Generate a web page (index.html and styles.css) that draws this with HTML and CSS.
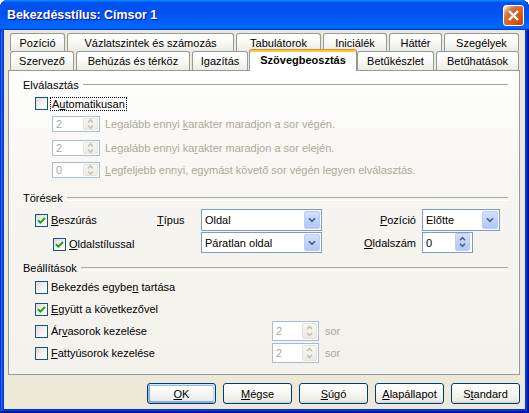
FILE: index.html
```html
<!DOCTYPE html>
<html lang="hu">
<head>
<meta charset="utf-8">
<title>Bekezdésstílus</title>
<link rel="stylesheet" href="styles.css">
</head>
<body>
<div class="window">
  <div class="titlebar">
    <span class="title">Bekezdésstílus: Címsor 1</span>
    <span class="close"><svg width="19" height="19" viewBox="0 0 19 19"><path d="M5 5L14 14M14 5L5 14" stroke="#fff" stroke-width="2.4"/></svg></span>
  </div>
  <div class="client">
    <div class="tabs">
      <div class="tabrow row1">
        <div class="tab w55">Pozíció</div>
        <div class="tab w167">Vázlatszintek és számozás</div>
        <div class="tab w85">Tabulátorok</div>
        <div class="tab w64">Iniciálék</div>
        <div class="tab w53">Háttér</div>
        <div class="tab w75">Szegélyek</div>
      </div>
      <div class="tabrow row2">
        <div class="tab w64">Szervező</div>
        <div class="tab w114">Behúzás és térköz</div>
        <div class="tab w56">Igazítás</div>
        <div class="tab active">Szövegbeosztás</div>
        <div class="tab w77">Betűkészlet</div>
        <div class="tab w83">Betűhatások</div>
      </div>
    </div>
    <div class="panel">
      <div class="ghead">Elválasztás</div>
      <div class="crow">
        <span class="cb"></span>
        <span class="clbl focus">A<u>u</u>tomatikusan</span>
      </div>
      <div class="srow sr1">
        <span class="spin sm dis"><span class="val">2</span><span class="sbtn"><svg width="13" height="12" viewBox="0 0 13 12"><path d="M4 4.5L6.5 2L9 4.5M4 7.5L6.5 10L9 7.5" fill="none" stroke="#c4c2b6" stroke-width="1.6"/></svg></span></span>
        <span class="stext">Legalább ennyi <u>k</u>arakter maradjon a sor végén.</span>
      </div>
      <div class="srow sr2">
        <span class="spin sm dis"><span class="val">2</span><span class="sbtn"><svg width="13" height="12" viewBox="0 0 13 12"><path d="M4 4.5L6.5 2L9 4.5M4 7.5L6.5 10L9 7.5" fill="none" stroke="#c4c2b6" stroke-width="1.6"/></svg></span></span>
        <span class="stext">Legalább ennyi ka<u>r</u>akter maradjon a sor elején.</span>
      </div>
      <div class="srow sr3">
        <span class="spin sm dis"><span class="val">0</span><span class="sbtn"><svg width="13" height="12" viewBox="0 0 13 12"><path d="M4 4.5L6.5 2L9 4.5M4 7.5L6.5 10L9 7.5" fill="none" stroke="#c4c2b6" stroke-width="1.6"/></svg></span></span>
        <span class="stext"><u>L</u>egfeljebb ennyi, egymást követő sor végén legyen elválasztás.</span>
      </div>

      <div class="ghead gh2">Törések</div>
      <div class="brow ba">
        <div class="bcell1"><span class="cb"><svg width="9" height="9" viewBox="0 0 9 9"><path d="M1 4.2L3.4 6.6L8 2" fill="none" stroke="#21a121" stroke-width="2"/></svg></span><span class="clbl"><u>B</u>eszúrás</span></div>
        <div class="bcell2"><u>T</u>ípus</div>
        <div class="select wide"><span class="stxt">Oldal</span><span class="dbtn"><svg width="16" height="18" viewBox="0 0 16 18"><path d="M4.5 7L8 10.5L11.5 7" fill="none" stroke="#4d6185" stroke-width="2"/></svg></span></div>
        <div class="bcell3"><u>P</u>ozíció</div>
        <div class="select narrow"><span class="stxt">Előtte</span><span class="dbtn"><svg width="16" height="18" viewBox="0 0 16 18"><path d="M4.5 7L8 10.5L11.5 7" fill="none" stroke="#4d6185" stroke-width="2"/></svg></span></div>
      </div>
      <div class="brow bb">
        <div class="bcell1 ind"><span class="cb"><svg width="9" height="9" viewBox="0 0 9 9"><path d="M1 4.2L3.4 6.6L8 2" fill="none" stroke="#21a121" stroke-width="2"/></svg></span><span class="clbl"><u>O</u>ldalstílussal</span></div>
        <div class="bcell2"></div>
        <div class="select wide short"><span class="stxt">Páratlan oldal</span><span class="dbtn"><svg width="16" height="18" viewBox="0 0 16 18"><path d="M4.5 7L8 10.5L11.5 7" fill="none" stroke="#4d6185" stroke-width="2"/></svg></span></div>
        <div class="bcell3"><u>O</u>ldalszám</div>
        <span class="spin big"><span class="val">0</span><span class="sbtn blue"><svg width="15" height="18" viewBox="0 0 15 18"><path d="M4.5 7L7.5 4L10.5 7M4.5 11L7.5 14L10.5 11" fill="none" stroke="#4d6185" stroke-width="1.8"/></svg></span></span>
      </div>

      <div class="ghead gh3">Beállítások</div>
      <div class="orow o1">
        <div class="ocell"><span class="cb"></span><span class="clbl">Bekezdés egybe<u>n</u> tartása</span></div>
      </div>
      <div class="orow">
        <div class="ocell"><span class="cb"><svg width="9" height="9" viewBox="0 0 9 9"><path d="M1 4.2L3.4 6.6L8 2" fill="none" stroke="#21a121" stroke-width="2"/></svg></span><span class="clbl"><u>E</u>gyütt a következővel</span></div>
      </div>
      <div class="orow">
        <div class="ocell"><span class="cb"></span><span class="clbl">Ár<u>v</u>asorok kezelése</span></div>
        <span class="spin md dis"><span class="val">2</span><span class="sbtn"><svg width="13" height="16" viewBox="0 0 13 16"><path d="M4 6L6.5 3.5L9 6M4 10L6.5 12.5L9 10" fill="none" stroke="#c4c2b6" stroke-width="1.6"/></svg></span></span>
        <span class="sor">sor</span>
      </div>
      <div class="orow">
        <div class="ocell"><span class="cb"></span><span class="clbl"><u>F</u>attyúsorok kezelése</span></div>
        <span class="spin md dis"><span class="val">2</span><span class="sbtn"><svg width="13" height="16" viewBox="0 0 13 16"><path d="M4 6L6.5 3.5L9 6M4 10L6.5 12.5L9 10" fill="none" stroke="#c4c2b6" stroke-width="1.6"/></svg></span></span>
        <span class="sor">sor</span>
      </div>
    </div>
    <div class="buttons">
      <div class="btn default"><u>O</u>K</div>
      <div class="btn"><u>M</u>égse</div>
      <div class="btn"><u>S</u>úgó</div>
      <div class="btn"><u>A</u>lapállapot</div>
      <div class="btn">S<u>t</u>andard</div>
    </div>
  </div>
</div>
</body>
</html>
```
FILE: styles.css
```css
* { box-sizing: border-box; }
html, body { margin: 0; padding: 0; }
body {
  background: #fff;
  font-family: "Liberation Sans", Arial, sans-serif;
  font-size: 11px;
  color: #000;
}
u { text-decoration: underline; text-underline-offset: 1px; }

.window {
  width: 529px;
  height: 413px;
  display: flex;
  flex-direction: column;
  background: #0831d9;
  border-radius: 8px 8px 0 0;
  box-shadow: inset -1px -1px #00138c, inset 1px 1px #0831d9,
              inset -2px -2px #001ea0, inset 2px 2px #166aee,
              inset -3px -3px #003bda, inset 3px 3px #0855dd;
}
.titlebar {
  height: 30px;
  flex: none;
  display: flex;
  align-items: center;
  justify-content: space-between;
  padding: 0 5px 0 7px;
  border-radius: 8px 8px 0 0;
  background: linear-gradient(180deg, #0997ff, #0053ee 8%, #0050ee 40%, #0066ff 88%, #0066ff 93%, #005bff 95%, #003dd7 96%, #003dd7);
}
.title {
  color: #fff;
  font-weight: bold;
  font-size: 12.4px;
  text-shadow: 1px 1px #0f1089;
}
.close {
  width: 21px;
  height: 21px;
  border: 1px solid #fff;
  border-radius: 3px;
  display: flex;
  align-items: center;
  justify-content: center;
  background: radial-gradient(circle at 90% 90%, #cc4600 0%, #dc6527 55%, #cd7546 70%, #ffccb2 90%, #fff 100%);
}

.client {
  flex: 1;
  margin: 0 4px 4px;
  background: #ece9d8;
  padding: 3px 5px 5px 4px;
  display: flex;
  flex-direction: column;
}

.tabs { padding-left: 2px; }
.tabrow { display: flex; gap: 2px; }
.row1 { height: 18px; align-items: flex-start; }
.row2 { height: 19px; align-items: flex-end; }
.tab {
  height: 18px;
  padding-top: 3px;
  border: 1px solid #919b9c;
  border-bottom: none;
  border-radius: 3px 3px 0 0;
  background: linear-gradient(180deg, #fff 0%, #fbfbf9 40%, #f1f0ea 80%, #ecebe6 100%);
  text-align: center;
  white-space: nowrap;
  line-height: 13px;
}
.row2 .tab { height: 19px; }
.row2 .tab.active {
  position: relative;
  z-index: 2;
  width: 108px;
  height: 22px;
  margin: 0 -2px -1px -1px;
  padding-top: 4px;
  background: #fff;
  border-top: 1px solid #e68b2c;
  box-shadow: inset 0 2px 0 #ffc73c;
  font-weight: bold;
}
.w53 { width: 53px; }
.w55 { width: 55px; }
.w56 { width: 56px; }
.w64 { width: 64px; }
.w75 { width: 75px; }
.w77 { width: 77px; }
.w83 { width: 83px; }
.w85 { width: 85px; }
.w114 { width: 114px; }
.w167 { width: 167px; }

.panel {
  position: relative;
  z-index: 1;
  height: 305px;
  flex: none;
  border: 1px solid #919b9c;
  background: linear-gradient(180deg, #fefefe 0%, #f7f6f3 35%, #f4f3ee 60%, #f3f2ed 100%);
  padding: 8px 11px 0 14px;
}

.ghead {
  display: flex;
  align-items: center;
  height: 13px;
  line-height: 13px;
}
.ghead::after {
  content: "";
  flex: 1;
  margin-left: 4px;
  height: 2px;
  border-top: 1px solid #aca899;
  border-bottom: 1px solid #fff;
}
.gh2 { margin-top: 14px; }
.gh3 { margin-top: 8px; }

.cb {
  flex: none;
  width: 13px;
  height: 13px;
  border: 1px solid #1c5180;
  background: linear-gradient(135deg, #dcdcd7 0%, #f4f4f1 60%, #fff 100%);
  display: inline-flex;
  align-items: center;
  justify-content: center;
}
.clbl { margin-left: 3px; white-space: nowrap; line-height: 13px; }
.clbl.focus {
  margin-left: 2px;
  padding: 0 1px;
  border: 1px dotted #000;
  line-height: 12px;
}

.crow {
  display: flex;
  align-items: center;
  height: 15px;
  margin-top: 4px;
  padding-left: 12px;
}
.srow {
  display: flex;
  align-items: center;
  height: 16px;
  padding-left: 29px;
}
.sr1 { margin-top: 5px; }
.sr2 { margin-top: 8px; }
.sr3 { margin-top: 6px; }
.stext { margin-left: 5px; color: #aca899; white-space: nowrap; }

.spin {
  display: flex;
  align-items: stretch;
  border: 1px solid #7f9db9;
  background: #fff;
  flex: none;
}
.spin.dis { border-color: #a9bbd1; color: #aca899; }
.spin.sm { width: 48px; height: 16px; }
.spin.md { width: 47px; height: 20px; }
.spin.big { width: 51px; height: 21px; }
.val { flex: 1; padding-left: 3px; display: flex; align-items: center; }
.sbtn {
  width: 15px;
  margin: 1px;
  border-radius: 2px;
  background: linear-gradient(180deg, #f7f7f4, #ecebe5);
  border: 1px solid #e4e2d8;
  display: flex;
  align-items: center;
  justify-content: center;
}
.sbtn.blue {
  margin: 0 2px 1px 1px;
  border: 1px solid #b9cdf6;
  background: linear-gradient(180deg, #d3e0fd 0%, #c1d3fb 50%, #b4c8f6 100%);
}

.brow { display: flex; align-items: center; height: 22px; }
.ba { margin-top: 4px; }
.bb { margin-top: 1px; align-items: flex-start; }
.bcell1 {
  width: 134px;
  padding-left: 12px;
  display: flex;
  align-items: center;
}
.bcell1.ind { padding-left: 30px; margin-top: 6px; }
.bcell2 { width: 44px; }
.bb .bcell2, .bb .bcell3 { align-self: center; }
.bcell3 { width: 100px; text-align: right; padding-right: 6px; }

.select {
  display: flex;
  align-items: stretch;
  height: 22px;
  border: 1px solid #7f9db9;
  background: #fff;
  flex: none;
}
.select.wide { width: 121px; }
.select.narrow { width: 78px; }
.select.short { height: 21px; }
.stxt { flex: 1; padding-left: 3px; display: flex; align-items: center; white-space: nowrap; overflow: hidden; }
.dbtn {
  width: 16px;
  margin: 1px;
  border-radius: 2px;
  border: 1px solid #b9cdf6;
  background: linear-gradient(180deg, #d3e0fd 0%, #c1d3fb 50%, #b1c6f6 100%);
  display: flex;
  align-items: center;
  justify-content: center;
}

.orow { display: flex; align-items: center; height: 20px; margin-top: 2px; }
.orow.o1 { margin-top: 2px; }
.ocell { width: 249px; padding-left: 12px; display: flex; align-items: center; }
.sor { margin-left: 6px; color: #aca899; }

.buttons {
  display: flex;
  justify-content: flex-end;
  gap: 7px;
  margin-top: 8px;
  height: 21px;
}
.btn {
  width: 69px;
  height: 21px;
  border: 1px solid #003c74;
  border-radius: 3px;
  background: linear-gradient(180deg, #fff 0%, #f8f8f5 40%, #ecebe5 86%, #d8d0c4 100%);
  display: flex;
  align-items: center;
  justify-content: center;
  white-space: nowrap;
}
.btn.default {
  box-shadow: inset -1px 1px #cee7ff, inset 1px 2px #98b8ea, inset -2px 2px #bcd4f6, inset 1px -1px #89ade4, inset 2px -2px #89ade4;
}
```
